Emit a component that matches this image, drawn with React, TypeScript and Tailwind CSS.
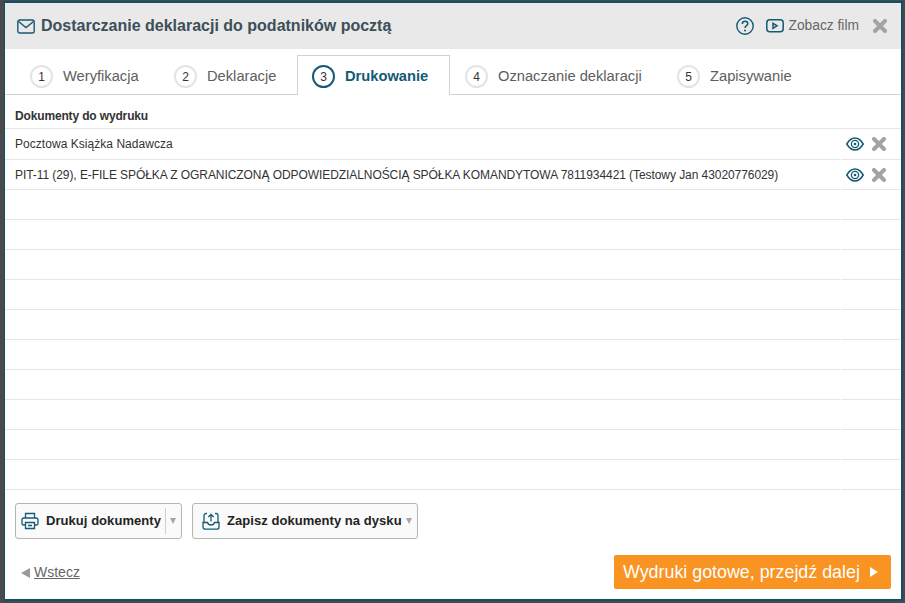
const tabs = [
  { n: 1, label: 'Weryfikacja', width: 'w-[144px]', pad: 'pl-[25px]' },
  { n: 2, label: 'Deklaracje', width: 'w-[148px]', pad: 'pl-[25px]' },
  { n: 3, label: 'Drukowanie', width: 'w-[153px]', pad: 'pl-[14px]', active: true },
  { n: 4, label: 'Oznaczanie deklaracji', width: 'w-[212px]', pad: 'pl-[15px]' },
  { n: 5, label: 'Zapisywanie', width: 'w-[150px]', pad: 'pl-[15px]' },
];

const rows = [
  'Pocztowa Książka Nadawcza',
  'PIT-11 (29), E-FILE SPÓŁKA Z OGRANICZONĄ ODPOWIEDZIALNOŚCIĄ SPÓŁKA KOMANDYTOWA 7811934421 (Testowy Jan 43020776029)',
  '', '', '', '', '', '', '', '', '', '',
];

function CloseIcon({ className }: { className: string }) {
  return (
    <svg viewBox="0 0 14 14" className={className}>
      <path d="M2 2 12 12M12 2 2 12" stroke="#a3a3a3" strokeWidth="4" strokeLinecap="round" />
    </svg>
  );
}

function EyeIcon() {
  return (
    <svg viewBox="0 0 18 14" className="h-[14px] w-[18px]" fill="none" stroke="#155a75">
      <path d="M.8 7C3 3.200 5.800 1 9 1s6 2.200 8.200 6C15 10.800 12.200 13 9 13S3 10.800.8 7Z" strokeWidth="1.500" />
      <circle cx="9" cy="7" r="3.600" strokeWidth="1.300" />
      <circle cx="9" cy="7" r="1.300" fill="#155a75" stroke="none" />
    </svg>
  );
}

function Caret() {
  return <span className="h-0 w-0 border-x-[3.5px] border-t-[6px] border-x-transparent border-t-[#a6a6a6]" />;
}

export default function App() {
  return (
    <div className="flex h-[603px] w-[905px] flex-col bg-[#474b4d] pb-[2px] pl-[4px] pr-[2px] pt-px font-['Liberation_Sans',Arial,sans-serif]">
      <div className="flex min-h-0 flex-1 flex-col border-b-2 border-l border-r-2 border-t-2 border-[#134f66] bg-white">
        <div className="flex h-[46px] items-center bg-[#e9e9e9] pl-[12px] pr-[14px]">
          <svg viewBox="0 0 18 15" className="h-[15px] w-[18px]" fill="none" stroke="#155a75" strokeWidth="1.400">
            <rect x=".8" y="1" width="16.400" height="13" rx="2" />
            <path d="M1.500 2.500 9 8.500l7.500-6" />
          </svg>
          <h1 className="ml-[6px] text-[16px] font-bold text-[#3d4f58]">Dostarczanie deklaracji do podatników pocztą</h1>
          <svg viewBox="0 0 18 18" className="ml-auto h-[18px] w-[18px]" fill="none" stroke="#155a75">
            <circle cx="9" cy="9" r="8.200" strokeWidth="1.400" />
            <path d="M6.300 7c0-1.700 1.200-2.700 2.800-2.700S11.800 5.300 11.800 6.800C11.800 8.600 9 8.800 9 11" strokeWidth="1.500" />
            <circle cx="9" cy="13.400" r="1" fill="#155a75" stroke="none" />
          </svg>
          <svg viewBox="0 0 18 14" className="ml-[12px] h-[14px] w-[18px]" fill="none" stroke="#155a75" strokeWidth="1.500">
            <rect x=".8" y=".8" width="16.400" height="12" rx="3" />
            <path d="M7 4.300v5l4-2.500Z" />
          </svg>
          <span className="ml-[4px] text-[13.8px] text-[#666]">Zobacz film</span>
          <CloseIcon className="ml-[14px] h-[14px] w-[14px]" />
        </div>

        <div className="mt-[6px] flex h-[40px] border-b border-[#d2d2d2] text-[14.7px]">
          {tabs.map((tab) =>
            tab.active ? (
              <div key={tab.n} className={`${tab.width} ${tab.pad} -mb-px flex items-center gap-[10px] border border-b-0 border-[#d2d2d2] bg-white pt-[2px] font-bold text-[#155a75]`}>
                <span className="flex h-[23px] w-[23px] items-center justify-center rounded-full border-2 border-[#155a75] text-[12px] font-normal text-[#333]">{tab.n}</span>
                {tab.label}
              </div>
            ) : (
              <div key={tab.n} className={`${tab.width} ${tab.pad} flex items-center gap-[10px] pt-[4px] text-[#5e5e5e]`}>
                <span className="flex h-[23px] w-[23px] items-center justify-center rounded-full border-2 border-[#e4e4e4] text-[12px] text-[#333]">{tab.n}</span>
                {tab.label}
              </div>
            ),
          )}
        </div>

        <div className="flex h-[34px] items-end border-b border-[#e6e6e6] pb-[3px] pl-[10px] text-[12px] font-bold tracking-[-0.15px] text-[#333]">Dokumenty do wydruku</div>
        {rows.map((text, i) => (
          <div key={i} className={`flex shrink-0 text-[12px] text-[#333] ${i === 0 ? 'h-[31px]' : 'h-[30px]'}`}>
            <div className={`flex w-[835px] items-center whitespace-nowrap border-b border-[#e6e6e6] pl-[10px] ${i === 0 ? 'tracking-[0.04px]' : 'tracking-[-0.07px]'}`}>{text}</div>
            <div className="ml-px flex flex-1 items-center border-b border-[#e6e6e6] pl-[5px]">
              {text && (
                <>
                  <EyeIcon />
                  <CloseIcon className="ml-[8px] h-[14px] w-[14px]" />
                </>
              )}
            </div>
          </div>
        ))}

        <div className="mt-[13px] flex gap-[10px] pl-[10px]">
          <button className="flex h-[36px] w-[167px] items-center rounded-[3px] border border-[#b5b5b5] bg-[#fafafa] pl-[5px] text-[13px] font-bold text-[#222]">
            <svg viewBox="0 0 18 18" className="h-[18px] w-[18px]" fill="none" stroke="#155a75" strokeWidth="1.300">
              <path d="M4.500 6V1.500h9V6M4 13H2.500A1.500 1.500 0 0 1 1 11.500V8a2 2 0 0 1 2-2h12a2 2 0 0 1 2 2v3.500a1.500 1.500 0 0 1-1.500 1.500H14" />
              <path d="M4.500 10.500h9v6h-9zM7 13.500h4" />
            </svg>
            <span className="ml-[7px] tracking-[0.05px]">Drukuj dokumenty</span>
            <span className="ml-[4px] h-[26px] border-l border-[#cfcfcf]" />
            <span className="ml-[4px] flex"><Caret /></span>
          </button>
          <button className="flex h-[36px] w-[226px] items-center rounded-[3px] border border-[#b5b5b5] bg-[#fafafa] pl-[9px] text-[13px] font-bold text-[#222]">
            <svg viewBox="0 0 18 18" className="h-[18px] w-[18px]" fill="none" stroke="#155a75" strokeWidth="1.300">
              <path d="M5 1.500H4A2 2 0 0 0 2 3.500V10M13 1.500h1A2 2 0 0 1 16 3.500V10" />
              <path d="M1 10.500h4.500c.5 2 1.500 2.500 3.500 2.500s3-.5 3.500-2.500H17v4.500a2.200 2.200 0 0 1-2.200 2.200H3.200A2.200 2.200 0 0 1 1 15Z" />
              <path d="M9 9.500V2.500M6.300 5 9 2.300 11.700 5" />
            </svg>
            <span className="ml-[7px] tracking-[0.05px]">Zapisz dokumenty na dysku</span>
            <span className="ml-[4px] flex"><Caret /></span>
          </button>
        </div>

        <div className="mt-[16px] flex items-center justify-between pl-[16px] pr-[10px]">
          <a className="flex items-center gap-[4px] pt-[1px] text-[14px] text-[#666]">
            <span className="h-0 w-0 border-y-[5px] border-r-[9px] border-y-transparent border-r-[#9a9a9a]" />
            <span className="underline">Wstecz</span>
          </a>
          <button className="flex h-[34px] w-[277px] items-center rounded-[2px] bg-[#f99321] pl-[9px] text-[17.85px] text-white">
            Wydruki gotowe, przejdź dalej
            <span className="ml-[10px] h-0 w-0 border-y-[5px] border-l-[8px] border-y-transparent border-l-white" />
          </button>
        </div>
      </div>
    </div>
  );
}
